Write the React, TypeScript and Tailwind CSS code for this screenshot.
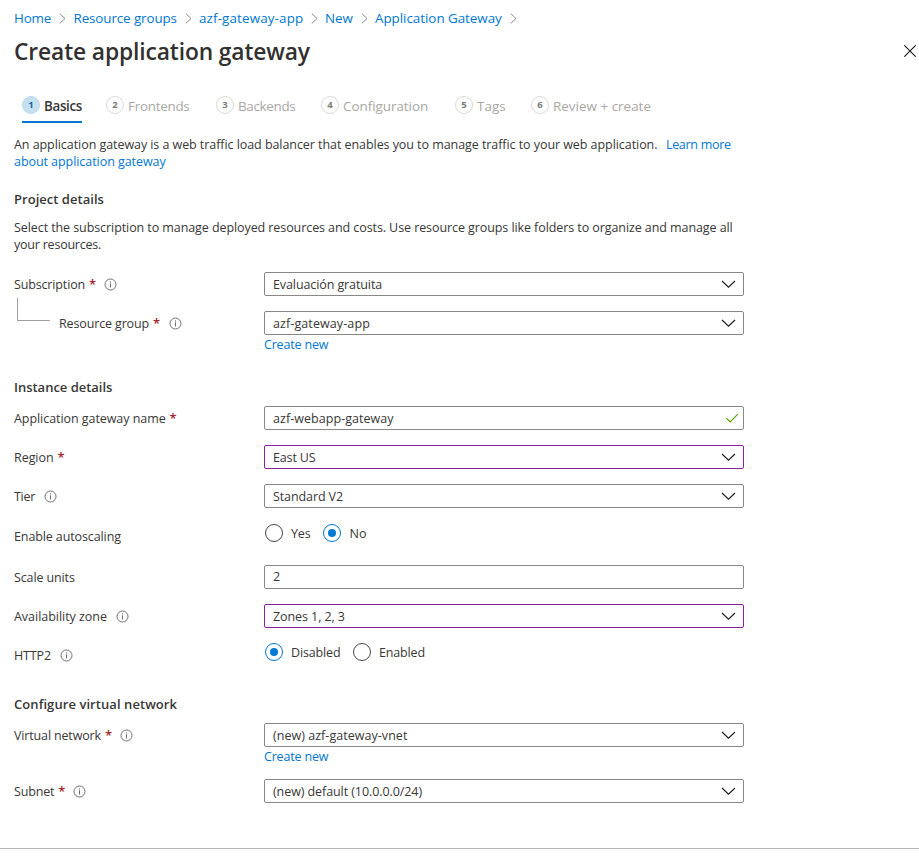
import type { ReactNode } from "react";

function Chevron() {
  return (
    <svg className="h-3 w-4 shrink-0" viewBox="0 0 16 12" fill="none" stroke="#1b1a19" strokeWidth="1.1">
      <path d="M2 3 L8.5 9.2 L15 3" />
    </svg>
  );
}

function Check() {
  return (
    <svg className="h-3 w-4 shrink-0" viewBox="0 0 16 12" fill="none" stroke="#57a300" strokeWidth="1.1">
      <path d="M2.2 6.2 L6.2 10 L13.8 2.2" />
    </svg>
  );
}

function CrumbArrow() {
  return (
    <svg className="h-[11px] w-[7px] shrink-0" viewBox="0 0 7 11" fill="none" stroke="#8a8886" strokeWidth="1">
      <path d="M0.8 0.6 L6 5.5 L0.8 10.4" />
    </svg>
  );
}

function Info() {
  return (
    <svg className="mt-px h-[13px] w-[13px] shrink-0" viewBox="0 0 13 13" fill="none">
      <circle cx="6.5" cy="6.5" r="5.5" stroke="#6b6967" strokeWidth="0.95" />
      <rect x="6" y="5.4" width="1" height="4" fill="#6b6967" />
      <rect x="6" y="3.4" width="1" height="1.1" fill="#6b6967" />
    </svg>
  );
}

function Label({ text, track, required, info }: { text: string; track: string; required?: boolean; info?: string }) {
  return (
    <div className="flex h-6 items-center">
      <span className={track}>{text}</span>
      {required && <span className="ml-[4px] w-[6px] text-[13px] font-semibold text-[#a4262c]">*</span>}
      {info && (
        <span className={info}>
          <Info />
        </span>
      )}
    </div>
  );
}

function Field({
  value,
  track,
  purple,
  icon,
}: {
  value: string;
  track: string;
  purple?: boolean;
  icon?: ReactNode;
}) {
  const border = purple ? "border-[#881fa0]" : "border-[#8a8886]";
  return (
    <div
      className={`flex h-6 w-[480px] items-center justify-between rounded-[2px] border bg-white pl-2 ${border}`}
    >
      <span className={track}>{value}</span>
      {icon}
    </div>
  );
}

function Select(props: { value: string; track: string; purple?: boolean }) {
  return (
    <Field
      {...props}
      icon={
        <span className="mr-[7px]">
          <Chevron />
        </span>
      }
    />
  );
}

function Radio({ text, track, on }: { text: string; track: string; on?: boolean }) {
  return (
    <div className="flex items-center gap-2">
      <span
        className={`flex h-[18px] w-[18px] shrink-0 items-center justify-center rounded-full border ${on ? "border-[#0078d4]" : "border-[#484644]"}`}
      >
        {on && <span className="h-2 w-2 rounded-full bg-[#0078d4]" />}
      </span>
      <span className={track}>{text}</span>
    </div>
  );
}

function Row({ label, children, className }: { label: ReactNode; children: ReactNode; className?: string }) {
  return (
    <div className={`flex items-start ${className ?? ""}`}>
      <div className="w-[250px] shrink-0">{label}</div>
      <div>{children}</div>
    </div>
  );
}

function SectionTitle({ text, track }: { text: string; track: string }) {
  return <h2 className={`h-[18px] text-[13px] font-semibold leading-[18px] ${track}`}>{text}</h2>;
}

function CreateNew() {
  return <a className="mt-px block h-[17px] tracking-[-0.18px] text-[#0078d4]">Create new</a>;
}

const crumbs = [
  { text: "Home", cls: "w-[59.5px]", track: "tracking-[-0.2px]" },
  { text: "Resource groups", cls: "w-[125.5px]", track: "tracking-[-0.1px]" },
  { text: "azf-gateway-app", cls: "w-[126px]", track: "tracking-[0.14px]" },
  { text: "New", cls: "w-[50px]", track: "tracking-[0px]" },
  { text: "Application Gateway", cls: "w-[150px]", track: "tracking-[-0.03px]" },
];

const tabs = [
  { text: "Basics", cls: "w-[84px]", track: "tracking-[-0.33px]" },
  { text: "Frontends", cls: "w-[110px]", track: "tracking-[-0.25px]" },
  { text: "Backends", cls: "w-[105px]", track: "tracking-[-0.3px]" },
  { text: "Configuration", cls: "w-[134px]", track: "tracking-[-0.02px]" },
  { text: "Tags", cls: "w-[76px]", track: "tracking-[0.05px]" },
  { text: "Review + create", cls: "w-[130px]", track: "tracking-[0.03px]" },
];

export default function App() {
  return (
    <div className="flex h-[859px] w-[919px] flex-col overflow-hidden bg-white font-['Open_Sans','Noto_Sans',sans-serif] text-[12.5px] leading-[17px] text-[#383736]">
      <nav className="flex h-9 items-center pl-[14px] text-[13.4px] text-[#0078d4]">
        {crumbs.map((c) => (
          <div key={c.text} className={`flex items-center gap-2 whitespace-nowrap ${c.cls}`}>
            <a className={c.track}>{c.text}</a>
            <CrumbArrow />
          </div>
        ))}
      </nav>

      <header className="flex h-[30px] items-center justify-between pl-[14px] pr-[3px]">
        <h1 className="pt-px text-[22.8px] font-semibold leading-[30px] tracking-[-0.13px] text-[#323130]">
          Create application gateway
        </h1>
        <svg className="h-[12px] w-[12px]" viewBox="0 0 12 12" fill="none" stroke="#1b1a19" strokeWidth="1.1">
          <path d="M0.3 0.3 L11.7 11.7 M11.7 0.3 L0.3 11.7" />
        </svg>
      </header>

      <div className="mt-[29px] flex h-7 pl-[22px] text-[13.4px]">
        {tabs.map((t, i) => (
          <div key={t.text} className={`shrink-0 ${t.cls}`}>
            <div
              className={`flex h-7 w-fit items-start gap-1 whitespace-nowrap ${i === 0 ? "border-b-2 border-[#0078d4] font-semibold" : "text-[#a9a7a5]"}`}
            >
              <span
                className={`mt-px flex h-[18px] w-[18px] items-center justify-center rounded-full border pb-px text-[9.5px] font-bold leading-none ${i === 0 ? "border-[#b9d8f6] bg-[#c7e0f0] text-[#1068a8]" : "border-[#dcdad8] text-[#7d7b79]"}`}
              >
                {i + 1}
              </span>
              <span className={`pt-[2px] leading-[18px] ${t.track}`}>{t.text}</span>
            </div>
          </div>
        ))}
      </div>

      <main className="flex flex-col pl-[14px] pt-[13px]">
        <p className="whitespace-nowrap">
          <span className="tracking-[-0.062px]">
            An application gateway is a web traffic load balancer that enables you to manage traffic to your web
            application.
          </span>
          <a className="ml-[8.5px] tracking-[-0.3px] text-[#0078d4]">Learn more</a>
          <br />
          <a className="tracking-[-0.06px] text-[#0078d4]">about application gateway</a>
        </p>

        <div className="mt-5">
          <SectionTitle text="Project details" track="tracking-[0.03px]" />
        </div>
        <p className="mt-[11px] whitespace-nowrap">
          <span className="tracking-[-0.082px]">
            Select the subscription to manage deployed resources and costs. Use resource groups like folders to organize
            and manage all
          </span>
          <br />
          <span className="tracking-[-0.22px]">your resources.</span>
        </p>

        <Row
          className="mt-[19px]"
          label={<Label text="Subscription" track="tracking-[-0.15px]" required info="ml-[9px]" />}
        >
          <Select value="Evaluación gratuita" track="tracking-[-0.1px]" />
        </Row>
        <Row
          className="mt-[2px]"
          label={
            <div className="flex">
              <div className="ml-[3px] h-[23px] w-[33px] border-b border-l border-[#a19f9d]" />
              <div className="ml-[9px] pt-[13px]">
                <Label text="Resource group" track="tracking-[-0.14px]" required info="ml-[10px]" />
              </div>
            </div>
          }
        >
          <div className="pt-[13px]">
            <Select value="azf-gateway-app" track="tracking-[0.1px]" />
            <CreateNew />
          </div>
        </Row>

        <div className="mt-[25px]">
          <SectionTitle text="Instance details" track="tracking-[-0.02px]" />
        </div>
        <div className="mt-[10px] flex flex-col gap-[15px]">
          <Row label={<Label text="Application gateway name" track="tracking-[-0.06px]" required />}>
            <Field
              value="azf-webapp-gateway"
              track="tracking-[0.05px]"
              icon={
                <span className="mr-[3px]">
                  <Check />
                </span>
              }
            />
          </Row>
          <Row label={<Label text="Region" track="tracking-[-0.05px]" required />}>
            <Select value="East US" track="tracking-[-0.15px]" purple />
          </Row>
          <Row label={<Label text="Tier" track="tracking-[-0.3px]" info="ml-[9px]" />}>
            <Select value="Standard V2" track="tracking-[-0.1px]" />
          </Row>
        </div>
        <Row className="mt-4" label={<Label text="Enable autoscaling" track="tracking-[-0.11px]" />}>
          <div className="flex gap-[13px] pl-px">
            <Radio text="Yes" track="tracking-[-0.17px]" />
            <Radio text="No" track="tracking-[0px]" on />
          </div>
        </Row>
        <Row className="mt-[17px]" label={<Label text="Scale units" track="tracking-[-0.12px]" />}>
          <Field value="2" track="pb-px" />
        </Row>
        <Row
          className="mt-[15px]"
          label={<Label text="Availability zone" track="tracking-[-0.03px]" info="ml-[9px]" />}
        >
          <Select value="Zones 1, 2, 3" track="tracking-[-0.08px]" purple />
        </Row>
        <Row className="mt-[15px]" label={<Label text="HTTP2" track="tracking-[-0.14px]" info="ml-[9px]" />}>
          <div className="flex gap-[12.5px] pl-px">
            <Radio text="Disabled" track="tracking-[-0.14px]" on />
            <Radio text="Enabled" track="tracking-[-0.15px]" />
          </div>
        </Row>

        <div className="mt-[28px]">
          <SectionTitle text="Configure virtual network" track="tracking-[0.07px]" />
        </div>
        <Row
          className="mt-[10px]"
          label={<Label text="Virtual network" track="tracking-[-0.15px]" required info="ml-[9.5px]" />}
        >
          <Select value="(new) azf-gateway-vnet" track="tracking-[0.04px]" />
          <CreateNew />
        </Row>
        <Row
          className="mt-[14px]"
          label={<Label text="Subnet" track="tracking-[-0.16px]" required info="ml-[9px]" />}
        >
          <Select value="(new) default (10.0.0.0/24)" track="tracking-[-0.08px]" />
        </Row>
      </main>

      <footer className="mt-[45px] h-[10px] border-t border-[#b8b6b4]" />
    </div>
  );
}
